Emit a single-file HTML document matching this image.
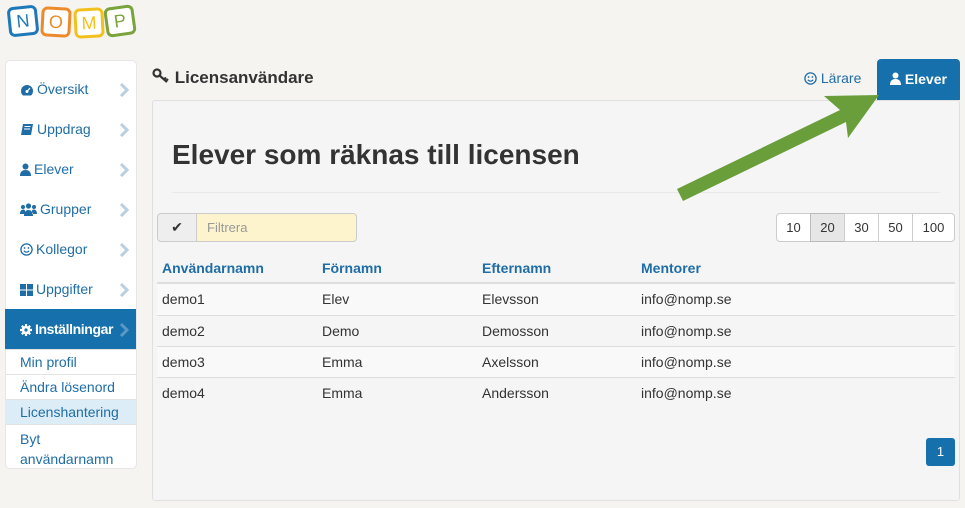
<!DOCTYPE html>
<html><head><meta charset="utf-8"><style>
*{box-sizing:border-box;margin:0;padding:0}
body{width:965px;height:508px;background:#f5f4f1;font-family:"Liberation Sans",sans-serif;position:relative;overflow:hidden;color:#333}
.a{position:absolute}
.tile{position:absolute;width:30px;height:30px;border:3px solid;border-radius:6px;font-size:18px;text-align:center;line-height:24px;background:#fff}
.side{left:5px;top:60px;width:132px;height:409px;background:#fff;border-radius:5px;border:1px solid #e6e6e6}
.mi{position:absolute;left:5px;width:131px;height:40px;font-size:14px;color:#1f6da6;padding-left:15px;line-height:40px}
.mi svg.i{vertical-align:-2px;margin-right:3px}
.mi .ch{position:absolute;left:114px;top:14px}
.sub{position:absolute;left:5px;width:131px;font-size:14px;color:#1f6da6;padding-left:15px;border-top:1px solid #e3e3e3}
.panel{left:152px;top:100px;width:808px;height:401px;background:#f5f5f5;border:1px solid #e0e0e0;border-radius:3px}
.row{position:absolute;left:157px;width:798px;height:31px;border-top:1px solid #ddd;font-size:14px;line-height:30px}
.row span,.hd span{position:absolute}
.hd{position:absolute;left:157px;top:255px;width:798px;height:29px;font-size:14px;font-weight:bold;color:#1f6da6;border-bottom:2px solid #ddd;line-height:26px}
.pg{position:absolute;top:213px;height:29px;border:1px solid #ccc;background:#fff;font-size:13px;text-align:center;line-height:27px}
</style></head><body>
<div class="tile" style="left:8px;top:6px;border-color:#1f78b8;color:#1f78b8;transform:rotate(-6deg)">N</div>
<div class="tile" style="left:41px;top:7px;border-color:#ec8a2c;color:#ec8a2c;transform:rotate(3deg)">O</div>
<div class="tile" style="left:74px;top:8px;border-color:#f2c11d;color:#f2c11d;transform:rotate(-3deg)">M</div>
<div class="tile" style="left:105px;top:6px;border-color:#7aa33c;color:#7aa33c;transform:rotate(-8deg)">P</div>

<div class="a side"></div>
<div class="mi" style="top:69px"><svg class="i" width="14" height="12" viewBox="0 0 14 12"><path d="M7 1a6 6 0 0 0-6 6c0 2 .8 3.5 2 4.5h8c1.2-1 2-2.5 2-4.5a6 6 0 0 0-6-6z" fill="#1f6da6"/><circle cx="7" cy="7.5" r="1.5" fill="#fff"/><path d="M7 7.5 L10 4" stroke="#fff" stroke-width="1.2"/></svg>Översikt<svg class="ch" width="10" height="14"><path d="M2 1 L8 7 L2 13" stroke="#b9cfe0" stroke-width="3" fill="none"/></svg></div>
<div class="mi" style="top:109px"><svg class="i" width="14" height="13" viewBox="0 0 14 13"><path d="M3 1h10l-2 11H1z" fill="#1f6da6"/><path d="M4.5 3.5h6M4 6h6" stroke="#fff" stroke-width="1"/></svg>Uppdrag<svg class="ch" width="10" height="14"><path d="M2 1 L8 7 L2 13" stroke="#b9cfe0" stroke-width="3" fill="none"/></svg></div>
<div class="mi" style="top:149px"><svg class="i" width="11" height="13" viewBox="0 0 11 13"><circle cx="5.5" cy="3.5" r="3" fill="#1f6da6"/><path d="M0 13c0-4 2-6 5.5-6s5.5 2 5.5 6z" fill="#1f6da6"/></svg>Elever<svg class="ch" width="10" height="14"><path d="M2 1 L8 7 L2 13" stroke="#b9cfe0" stroke-width="3" fill="none"/></svg></div>
<div class="mi" style="top:189px"><svg class="i" width="17" height="13" viewBox="0 0 17 13"><circle cx="8.5" cy="3" r="2.6" fill="#1f6da6"/><circle cx="3" cy="4" r="2" fill="#1f6da6"/><circle cx="14" cy="4" r="2" fill="#1f6da6"/><path d="M4 13c0-4 2-6 4.5-6s4.5 2 4.5 6zM0 11c0-3 1.5-4.5 3-4.5s2 .5 2 1.5v3zM17 11c0-3-1.5-4.5-3-4.5s-2 .5-2 1.5v3z" fill="#1f6da6"/></svg>Grupper<svg class="ch" width="10" height="14"><path d="M2 1 L8 7 L2 13" stroke="#b9cfe0" stroke-width="3" fill="none"/></svg></div>
<div class="mi" style="top:229px"><svg class="i" width="13" height="13" viewBox="0 0 13 13"><circle cx="6.5" cy="6.5" r="5.6" fill="none" stroke="#1f6da6" stroke-width="1.3"/><circle cx="4.6" cy="5" r=".9" fill="#1f6da6"/><circle cx="8.4" cy="5" r=".9" fill="#1f6da6"/><path d="M3.8 7.8q2.7 2.8 5.4 0" stroke="#1f6da6" stroke-width="1.2" fill="none"/></svg>Kollegor<svg class="ch" width="10" height="14"><path d="M2 1 L8 7 L2 13" stroke="#b9cfe0" stroke-width="3" fill="none"/></svg></div>
<div class="mi" style="top:269px"><svg class="i" width="13" height="12" viewBox="0 0 13 12"><rect x="0" y="0" width="6" height="5.5" fill="#1f6da6"/><rect x="7" y="0" width="6" height="5.5" fill="#1f6da6"/><rect x="0" y="6.5" width="6" height="5.5" fill="#1f6da6"/><rect x="7" y="6.5" width="6" height="5.5" fill="#1f6da6"/></svg>Uppgifter<svg class="ch" width="10" height="14"><path d="M2 1 L8 7 L2 13" stroke="#b9cfe0" stroke-width="3" fill="none"/></svg></div>
<div class="mi" style="top:309px;background:#1570ab;color:#fff;font-weight:bold;height:40px;letter-spacing:-0.4px"><svg class="i" width="12" height="12" viewBox="0 0 12 12"><circle cx="6" cy="6" r="4.3" fill="#fff"/><path d="M6 0v12M0 6h12M1.8 1.8l8.4 8.4M10.2 1.8l-8.4 8.4" stroke="#fff" stroke-width="2.2"/><circle cx="6" cy="6" r="1.6" fill="#1570ab"/></svg>Inställningar<svg class="ch" width="10" height="14"><path d="M2 1 L8 7 L2 13" stroke="#5c98c4" stroke-width="3" fill="none"/></svg></div>
<div class="sub" style="top:349px;height:25px;line-height:25px">Min profil</div>
<div class="sub" style="top:374px;height:25px;line-height:25px">Ändra lösenord</div>
<div class="sub" style="top:399px;height:25px;line-height:25px;background:#dcedf8">Licenshantering</div>
<div class="sub" style="top:424px;height:44px;line-height:20px;padding-top:4px">Byt<br>användarnamn</div>

<div class="a" style="left:152px;top:68px;font-size:17px;font-weight:bold;color:#333">
<svg width="18" height="16" viewBox="0 0 18 16" style="vertical-align:-1px"><circle cx="5" cy="5" r="3.5" fill="none" stroke="#333" stroke-width="2.2"/><path d="M7.5 7.5 L15 14 M12 11.5 L14 9.5 M14 13 L16 11" stroke="#333" stroke-width="2.2" fill="none"/></svg> Licensanvändare</div>
<div class="a" style="left:804px;top:70px;font-size:14px;color:#1f6da6"><svg width="13" height="13" viewBox="0 0 13 13" style="vertical-align:-2px"><circle cx="6.5" cy="6.5" r="5.6" fill="none" stroke="#1f6da6" stroke-width="1.3"/><circle cx="4.6" cy="5" r=".9" fill="#1f6da6"/><circle cx="8.4" cy="5" r=".9" fill="#1f6da6"/><path d="M3.8 7.8q2.7 2.8 5.4 0" stroke="#1f6da6" stroke-width="1.2" fill="none"/></svg> Lärare</div>
<div class="a" style="left:877px;top:59px;width:83px;height:41px;background:#1570ab;border-radius:4px 4px 0 0;color:#fff;font-weight:bold;font-size:14px;text-align:center;line-height:40px"><svg width="11" height="13" viewBox="0 0 11 13" style="vertical-align:-1px"><circle cx="5.5" cy="3.5" r="3" fill="#fff"/><path d="M0 13c0-4 2-6 5.5-6s5.5 2 5.5 6z" fill="#fff"/></svg> Elever</div>

<div class="a panel"></div>
<div class="a" style="left:172px;top:139px;font-size:28px;font-weight:bold;color:#333">Elever som räknas till licensen</div>
<div class="a" style="left:172px;top:192px;width:768px;border-top:1px solid #e8e8e8"></div>

<div class="a" style="left:157px;top:213px;width:40px;height:29px;border:1px solid #ccc;border-radius:4px 0 0 4px;background:#eee;text-align:center;line-height:27px;font-size:14px">✔</div>
<div class="a" style="left:196px;top:213px;width:161px;height:29px;border:1px solid #ccc;border-radius:0 4px 4px 0;background:#fdf3cc;color:#999;font-size:13px;line-height:27px;padding-left:10px">Filtrera</div>

<div class="pg" style="left:776px;width:35px;border-radius:4px 0 0 4px">10</div>
<div class="pg" style="left:810px;width:35px;background:#e6e6e6;border-color:#bbb">20</div>
<div class="pg" style="left:844px;width:35px">30</div>
<div class="pg" style="left:878px;width:35px">50</div>
<div class="pg" style="left:912px;width:43px;border-radius:0 4px 4px 0">100</div>

<div class="hd"><span style="left:5px">Användarnamn</span><span style="left:165px">Förnamn</span><span style="left:325px">Efternamn</span><span style="left:484px">Mentorer</span></div>
<div class="row" style="top:284px;background:#f9f9f9;border-top:none"><span style="left:5px">demo1</span><span style="left:165px">Elev</span><span style="left:325px">Elevsson</span><span style="left:484px">info@nomp.se</span></div>
<div class="row" style="top:315px"><span style="left:5px">demo2</span><span style="left:165px">Demo</span><span style="left:325px">Demosson</span><span style="left:484px">info@nomp.se</span></div>
<div class="row" style="top:346px;background:#f9f9f9"><span style="left:5px">demo3</span><span style="left:165px">Emma</span><span style="left:325px">Axelsson</span><span style="left:484px">info@nomp.se</span></div>
<div class="row" style="top:377px"><span style="left:5px">demo4</span><span style="left:165px">Emma</span><span style="left:325px">Andersson</span><span style="left:484px">info@nomp.se</span></div>

<div class="a" style="left:926px;top:438px;width:29px;height:28px;background:#1570ab;border-radius:3px;color:#fff;font-size:13px;text-align:center;line-height:28px">1</div>

<svg class="a" style="left:0;top:0" width="965" height="508"><path d="M677 189 L840 110 L824 96 L879 95 L848 138 L846 122 L683 201 Z" fill="#6a9e3a"/></svg>
</body></html>
